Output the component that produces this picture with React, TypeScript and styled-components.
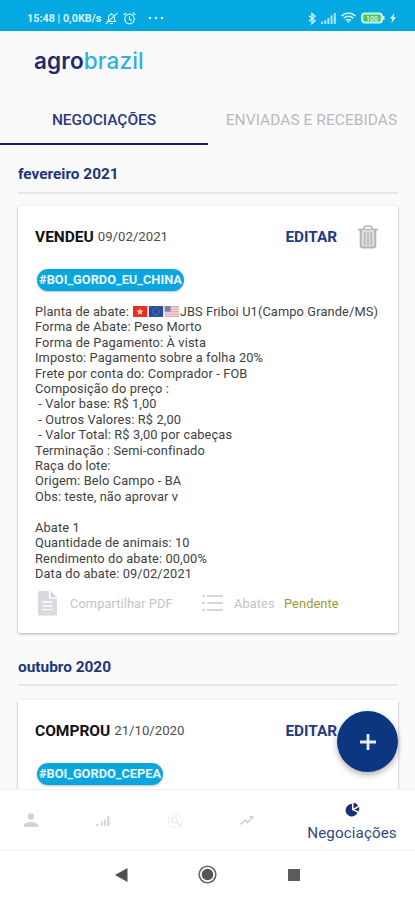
import React from 'react';
import styled, { createGlobalStyle } from 'styled-components';

const navy = '#1c2f77';

const GlobalStyle = createGlobalStyle`
  * { box-sizing: border-box; }
  html, body { margin: 0; padding: 0; background: #fafafa; }
  body { font-family: Roboto, "Liberation Sans", sans-serif; }
`;

const Screen = styled.div`
  width: 415px;
  height: 900px;
  display: flex;
  flex-direction: column;
  overflow: hidden;
  background: #fafafa;
  white-space: nowrap;
`;

const StatusBar = styled.header`
  flex: none;
  height: 31px;
  padding: 5px 19px 0 27px;
  display: flex;
  align-items: center;
  background: #04a9e1;
  color: #d5f3fd;
  font-size: 10.8px;
  font-weight: 700;
  svg { display: block; }
`;

const Clock = styled.span`
  width: 78px;
`;

const StatusIcons = styled.div<{ $right?: boolean }>`
  display: flex;
  align-items: center;
  gap: 5px;
  margin-left: ${(p) => (p.$right ? 'auto' : '0')};
`;

const LogoBar = styled.div`
  flex: none;
  height: 62px;
  padding: 15px 0 0 34px;
  font-family: Inter, sans-serif;
  font-size: 22.5px;
  font-weight: 600;
  line-height: 29px;
  letter-spacing: 0.15px;
  color: #202b6c;
  span { color: #2eb0e6; font-weight: 500; }
`;

const Tabs = styled.nav`
  flex: none;
  height: 52px;
  display: grid;
  grid-template-columns: 208px 207px;
`;

const Tab = styled.div<{ $active?: boolean }>`
  padding-top: 17px;
  text-align: center;
  font-size: 15.5px;
  line-height: 20px;
  letter-spacing: ${(p) => (p.$active ? '-0.05px' : '0.05px')};
  font-weight: ${(p) => (p.$active ? 500 : 400)};
  color: ${(p) => (p.$active ? '#283a7d' : '#b9b9bd')};
  border-bottom: 2px solid ${(p) => (p.$active ? '#1d1d68' : 'transparent')};
`;

const Feed = styled.main`
  flex: 1;
  min-height: 0;
  overflow: hidden;
  padding: 0 17px 0 18px;
`;

const MonthHeading = styled.h2<{ $next?: boolean }>`
  margin: ${(p) => (p.$next ? '14px 0 14px' : '0 0 12px')};
  height: ${(p) => (p.$next ? 39 : 49)}px;
  padding-top: ${(p) => (p.$next ? 10 : 19)}px;
  font-size: 15.4px;
  line-height: 20px;
  font-weight: 700;
  color: #21357d;
  border-bottom: 2px solid #e7e7e7;
`;

const Card = styled.article`
  height: 427px;
  padding: 0 20px 0 17px;
  background: #fff;
  border-radius: 2px;
  box-shadow: 0 1px 3px rgba(0, 0, 0, 0.3);
  display: flex;
  flex-direction: column;
`;

const CardHeader = styled.div<{ $height: number }>`
  height: ${(p) => p.$height}px;
  padding-bottom: ${(p) => (p.$height - 61) / 2}px;
  margin-bottom: ${(p) => 63 - p.$height}px;
  display: flex;
  align-items: center;
  color: #4d4d4d;
  font-size: 13.2px;
  svg { display: block; margin-left: 21px; }
`;

const Action = styled.strong`
  font-size: 15.5px;
  font-weight: 700;
  color: #111;
  margin-right: 4px;
`;

const EditButton = styled.span`
  margin-left: auto;
  font-size: 15.3px;
  font-weight: 700;
  color: #213b80;
`;

const Chip = styled.span<{ $width: number }>`
  margin-left: 2px;
  width: ${(p) => p.$width}px;
  height: 22px;
  border-radius: 11px;
  background: #0aa6df;
  color: #e8f8fe;
  font-size: 12.8px;
  line-height: 22px;
  font-weight: 700;
  text-align: center;
  box-shadow: 0 1px 2px rgba(0, 0, 0, 0.25);
`;

const Details = styled.div`
  margin: 13px 0 0;
  font-size: 12.8px;
  line-height: 15.42px;
  letter-spacing: 0.13px;
  color: #414141;
  white-space: pre;
`;

const Line = styled.div`
  height: 15.42px;
  display: flex;
  align-items: center;
`;

const Flags = styled.svg`
  display: block;
  width: 48px;
  height: 11px;
`;

const CardFooter = styled.div`
  display: flex;
  align-items: center;
  height: 28px;
  margin-top: 8px;
  font-size: 12.8px;
  color: #c2c3c8;
  svg { display: block; flex: none; }
`;

const FooterLabel = styled.span<{ $width: number; $left: number; $tone?: string }>`
  width: ${(p) => p.$width}px;
  margin-left: ${(p) => p.$left}px;
  color: ${(p) => p.$tone ?? '#c2c3c8'};
  letter-spacing: 0.1px;
`;

const Fab = styled.button`
  position: absolute;
  right: 17px;
  bottom: 17px;
  width: 61px;
  height: 61px;
  padding: 0;
  border: 0;
  border-radius: 50%;
  background: #0d3680;
  box-shadow: 0 3px 6px rgba(0, 0, 0, 0.3);
  display: grid;
  place-items: center;
`;

const BottomNav = styled.nav`
  flex: none;
  position: relative;
  height: 61px;
  display: grid;
  grid-template-columns: 67px 72px 72px 72px 132px;
  background: #fff;
  border-top: 1px solid #f0f0f0;
`;

const FabAnchor = styled.div`
  position: relative;
  flex: none;
  height: 0;
  z-index: 1;
`;

const NavItem = styled.div<{ $active?: boolean; $first?: boolean }>`
  display: flex;
  flex-direction: column;
  align-items: center;
  padding: ${(p) => (p.$active ? '12px 0 0 6px' : p.$first ? '23px 5px 0 0' : '23px 0 0')};
  font-size: 15.2px;
  line-height: 20px;
  letter-spacing: 0.1px;
  color: #34477f;
  svg { display: block; margin-bottom: 6px; }
`;

const SystemNav = styled.footer`
  flex: none;
  height: 50px;
  border-top: 1px solid #f4f4f4;
  padding-bottom: 2px;
  background: #fff;
  display: grid;
  grid-template-columns: 78px 86px 87px 86px 1fr;
  justify-items: center;
  align-items: center;
  svg { display: block; }
`;

const Trash = () => (
  <svg width="20" height="24" viewBox="0 0 20 24" fill="none" stroke="#b4b4ba">
    <path d="M6 4V2.5Q6 1.3 7.2 1.3h5.6Q14 1.3 14 2.5V4" strokeWidth="1.5" />
    <path d="M0 4.6h20" strokeWidth="1.8" />
    <path d="M2.7 5v15.5q0 2 2 2h10.6q2 0 2-2V5" fill="#dcdce1" strokeWidth="2" />
    <path d="M6.7 7.5v12.5M10 7.5v12.5M13.3 7.5v12.5" strokeWidth="1.4" />
  </svg>
);

const FileIcon = () => (
  <svg width="19" height="25" viewBox="0 0 19 25">
    <path d="M1.5 0H11v7.5h8V23q0 1.5-1.5 1.5h-16Q0 24.5 0 23V1.5Q0 0 1.5 0z" fill="#d9d9df" />
    <path d="M12.5 0L19 6.2h-6.5z" fill="#d4d4da" />
    <path d="M4.5 11h10M4.5 14.8h10M4.5 18.6h10" stroke="#fff" strokeWidth="1.3" />
  </svg>
);

const ListIcon = () => (
  <svg width="21" height="18" viewBox="0 0 21 18" stroke="#d6d6da" strokeWidth="1.8">
    <path d="M0 2h3M5 2h16M0 9h3M5 9h16M0 16h3M5 16h16" />
  </svg>
);

const SilentBell = () => (
  <svg width="13" height="13" viewBox="0 0 13 13" fill="none" stroke="#d5f3fd" strokeWidth="1.1">
    <path d="M2.5 9.5h8L9.5 8V5.5Q9.5 2.5 6.5 2.5T3.5 5.5V8zM5 11.5h3M12.5.8L.8 12M6.5 1v1.5" />
  </svg>
);

const Alarm = () => (
  <svg width="13" height="13" viewBox="0 0 13 13" fill="none" stroke="#d5f3fd" strokeWidth="1.2">
    <circle cx="6.5" cy="7" r="4.8" />
    <path d="M6.5 4.3V7.3L8.5 8.4M.7 3L3.3.8M12.3 3L9.7.8" />
  </svg>
);

const Bluetooth = () => (
  <svg width="8" height="13" viewBox="0 0 8 13" fill="none" stroke="#d5f3fd" strokeWidth="1.4">
    <path d="M1 3.8l6 5-3 2.700v-10l3 2.700-6 5" />
  </svg>
);

const Signal = () => (
  <svg width="15" height="11" viewBox="0 0 15 11" fill="#a9e5fa">
    <path d="M0 8.5h2V11H0zM3.2 7h2v4h-2zM6.4 5h2v6h-2zM9.6 2.5h2V11h-2zM12.8 0h2v11h-2z" />
  </svg>
);

const Wifi = () => (
  <svg width="15" height="12" viewBox="0 0 15 12" fill="none" stroke="#d5f3fd" strokeWidth="1.6">
    <path d="M.5 4Q7.5-2 14.5 4M2.7 6.200Q7.5 2.300 12.3 6.200M5 8.500Q7.5 6.500 10 8.500" />
    <path d="M6 9.3h3L7.5 11z" fill="#d5f3fd" stroke="none" />
  </svg>
);

const Battery = () => (
  <svg width="24" height="12" viewBox="0 0 24 12">
    <rect x=".7" y="1" width="20.6" height="10" rx="3" fill="#a9e8cf" stroke="#d5f3fd" strokeWidth="1.2" />
    <rect x="2.5" y="2.7" width="17" height="6.6" rx="1" fill="#57bd55" />
    <rect x="22" y="4" width="1.5" height="4" fill="#d5f3fd" />
    <text x="11" y="8.6" textAnchor="middle" fontFamily="Roboto, sans-serif" fontSize="7" fontWeight="700" fill="#dff6c8">100</text>
  </svg>
);

const Bolt = () => (
  <svg width="6" height="10" viewBox="0 0 6 10" fill="#e5f8ff"><path d="M4.5 0L0 5.5h2.3L1.5 10 6 4.2H3.6z" /></svg>
);

const FlagStrip = () => (
  <Flags viewBox="0 0 48 11">
    <rect x="1" width="14.500" height="11" fill="#e52d22" />
    <path d="M8 2l1 2.4 2.6.2-2 1.6.7 2.6L8 7.4 5.7 8.8l.7-2.6-2-1.6 2.6-.2z" fill="#ffd9a5" />
    <rect x="17" width="14.500" height="11" fill="#244ba3" />
    <circle cx="24" cy="5.5" r="3.2" fill="none" stroke="#9b9f83" strokeWidth="1" strokeDasharray="1 1" />
    <rect x="33" width="14.500" height="11" fill="#f0d3d8" />
    <path d="M33 .6h14.500M33 3.2h14.500M33 5.8h14.500M33 8.2h14.500M33 10.5h14.500" stroke="#dda7b0" strokeWidth="1.1" />
    <rect x="33" width="6" height="5.5" fill="#7d7ba9" />
  </Flags>
);

const details = [
  'Forma de Abate: Peso Morto',
  'Forma de Pagamento: À vista',
  'Imposto: Pagamento sobre a folha 20%',
  'Frete por conta do: Comprador - FOB',
  'Composição do preço :',
  ' - Valor base: R$ 1,00',
  ' - Outros Valores: R$ 2,00',
  ' - Valor Total: R$ 3,00 por cabeças',
  'Terminação : Semi-confinado',
  'Raça do lote:',
  'Origem: Belo Campo - BA',
  'Obs: teste, não aprovar v',
  '',
  'Abate 1',
  'Quantidade de animais: 10',
  'Rendimento do abate: 00,00%',
  'Data do abate: 09/02/2021',
];

export default function App() {
  return (
    <>
      <GlobalStyle />
      <Screen>
        <StatusBar>
          <Clock>15:48 | 0,0KB/s</Clock>
          <StatusIcons>
            <SilentBell />
            <Alarm />
            <svg width="26" height="4" viewBox="0 0 26 4" fill="#c8f0fc">
              <circle cx="9" cy="2" r="1.3" /><circle cx="15" cy="2" r="1.3" /><circle cx="21" cy="2" r="1.3" />
            </svg>
          </StatusIcons>
          <StatusIcons $right>
            <Bluetooth /><Signal /><Wifi /><Battery /><Bolt />
          </StatusIcons>
        </StatusBar>
        <LogoBar>agro<span>brazil</span></LogoBar>
        <Tabs>
          <Tab $active>NEGOCIAÇÕES</Tab>
          <Tab>ENVIADAS E RECEBIDAS</Tab>
        </Tabs>
        <Feed>
          <MonthHeading>fevereiro 2021</MonthHeading>
          <Card>
            <CardHeader $height={62}>
              <Action>VENDEU</Action>
              09/02/2021
              <EditButton>EDITAR</EditButton>
              <Trash />
            </CardHeader>
            <Chip $width={147}>#BOI_GORDO_EU_CHINA</Chip>
            <Details>
              <Line>Planta de abate: <FlagStrip />JBS Friboi U1(Campo Grande/MS)</Line>
              {details.map((text, i) => <Line key={i}>{text}</Line>)}
            </Details>
            <CardFooter>
              <FooterLabel $width={22} $left={3}><FileIcon /></FooterLabel>
              <FooterLabel $width={122} $left={10}>Compartilhar PDF</FooterLabel>
              <FooterLabel $width={21} $left={10}><ListIcon /></FooterLabel>
              <FooterLabel $width={40} $left={11}>Abates</FooterLabel>
              <FooterLabel $width={56} $left={10} $tone="#999b36">Pendente</FooterLabel>
            </CardFooter>
          </Card>
          <MonthHeading $next>outubro 2020</MonthHeading>
          <Card>
            <CardHeader $height={61}>
              <Action>COMPROU</Action>
              21/10/2020
              <EditButton>EDITAR</EditButton>
              <Trash />
            </CardHeader>
            <Chip $width={126}>#BOI_GORDO_CEPEA</Chip>
          </Card>
        </Feed>
        <FabAnchor>
          <Fab aria-label="+">
            <svg width="16" height="16" viewBox="0 0 16 16" stroke="#e6ebf5" strokeWidth="2.8"><path d="M8 0v16M0 8h16" /></svg>
          </Fab>
        </FabAnchor>
        <BottomNav>
          <NavItem $first>
            <svg width="14" height="14" viewBox="0 0 14 14" fill="#d3d3d5"><circle cx="7" cy="3.5" r="3.2" /><path d="M0 14v-1.5Q0 9 7 9t7 3.5V14z" /></svg>
          </NavItem>
          <NavItem>
            <svg width="14" height="14" viewBox="0 0 14 14" fill="#d8d8dc"><path d="M0 11h2.5v2H0zM5 8.5h2V13H5zM8 6.5h2V13H8zM11 3h2.5v10H11z" /></svg>
          </NavItem>
          <NavItem>
            <svg width="16" height="16" viewBox="0 0 16 16" fill="none" stroke="#e6e6e9"><circle cx="8" cy="8" r="6.8" strokeDasharray="3 1.5" /><circle cx="7.5" cy="7" r="2.8" /><path d="M9.5 9l4.5 4" strokeWidth="1.5" /></svg>
          </NavItem>
          <NavItem>
            <svg width="14" height="14" viewBox="0 0 14 14" fill="none" stroke="#c9c9cc" strokeWidth="1.3"><path d="M.5 11.5L5 7l2.500 2.500L13 4M9.500 3.700h3.700" /></svg>
          </NavItem>
          <NavItem $active>
            <svg width="15" height="15" viewBox="0 0 15 15" fill={navy}>
              <path d="M7 2v6l5.5 2.5A6.200 6.200 0 1 1 7 2z" />
              <path d="M8.500.8Q12 1 13 4L8.500 6.500zM9.500 7.500l4.700-2.500q.5 2-.7 4.500z" />
            </svg>
            Negociações
          </NavItem>
        </BottomNav>
        <SystemNav>
          <span />
          <svg width="13" height="14" viewBox="0 0 13 14" fill="#505050"><path d="M0 7L12.5 0v14z" /></svg>
          <svg width="19" height="19" viewBox="0 0 19 19"><circle cx="9.5" cy="9.5" r="8.3" fill="none" stroke="#666" strokeWidth="1.6" /><circle cx="9.5" cy="9.5" r="5.8" fill="#555" /></svg>
          <svg width="12" height="12" viewBox="0 0 12 12"><rect width="12" height="12" fill="#5b5b5b" /></svg>
        </SystemNav>
      </Screen>
    </>
  );
}
